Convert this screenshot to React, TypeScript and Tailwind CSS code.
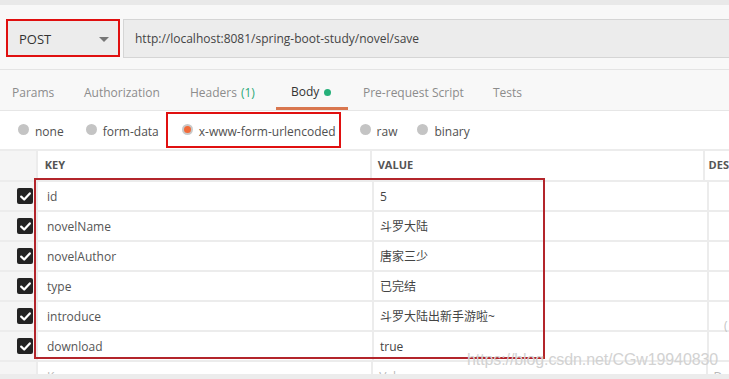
const rows = [
  { key: "id", value: "5" },
  { key: "novelName", value: "斗罗大陆" },
  { key: "novelAuthor", value: "唐家三少" },
  { key: "type", value: "已完结" },
  { key: "introduce", value: "斗罗大陆出新手游啦~" },
  { key: "download", value: "true" },
]

const tabs = [
  { label: "Params", w: "w-[72px]", pl: "pl-[12px]" },
  { label: "Authorization", w: "w-[106px]", pl: "pl-[12px]" },
]

function Radio({ label, active }: { label: string; active?: boolean }) {
  return (
    <div className="flex items-center">
      <span
        className={
          active
            ? "w-[11px] h-[11px] rounded-full bg-[#c9c9c9] flex items-center justify-center -mt-[4px]"
            : "w-[11px] h-[11px] rounded-full bg-[#c4c4c4] -mt-[4px]"
        }
      >
        {active && <span className="w-[7px] h-[7px] rounded-full bg-[#f26b3a]" />}
      </span>
      <span className="ml-[6px] text-[12px] text-[#505050]">{label}</span>
    </div>
  )
}

function Check() {
  return (
    <span className="w-[16px] h-[16px] rounded-[2px] bg-[#232323] flex items-center justify-center">
      <svg width="11" height="9" viewBox="0 0 11 9" fill="none">
        <path d="M1.2 4.6 L4.2 7.5 L9.8 1.4" stroke="#fff" strokeWidth="2.2" strokeLinecap="round" strokeLinejoin="round" />
      </svg>
    </span>
  )
}

export default function App() {
  return (
    <div
      className="relative w-[729px] h-[379px] overflow-hidden bg-[#ececec]"
      style={{ fontFamily: '"Open Sans", "Noto Sans CJK SC", sans-serif' }}
    >
      <div className="h-[5px] bg-[#e9e9e9]" />

      <div className="bg-[#f8f8f8] pt-[14px]">
        {/* url bar */}
        <div className="flex h-[39px] pl-[6px]">
          <div className="w-[114px] h-[38px] bg-[#ececec] border-2 border-[#e01010] flex items-center justify-between pl-[11px] pr-[9px] pt-[3px]">
            <span className="text-[13px] text-[#333]">POST</span>
            <span className="w-0 h-0 border-l-[5px] border-r-[5px] border-t-[5px] border-l-transparent border-r-transparent border-t-[#777]" />
          </div>
          <div className="ml-[3px] flex-1 bg-[#ececec] border border-[#d5d5d5] border-r-0 flex items-center pl-[11px] pt-[1px]">
            <span className="text-[12px] text-[#444]">http://localhost:8081/spring-boot-study/novel/save</span>
          </div>
        </div>

        {/* tabs */}
        <div className="mt-[11px] border-t border-[#e4e4e4] h-[41px] flex items-end">
          {tabs.map((t) => (
            <div key={t.label} className={`${t.w} ${t.pl} h-full flex items-center pt-[6px]`}>
              <span className="text-[12px] text-[#8c8c8c]">{t.label}</span>
            </div>
          ))}
          <div className="w-[98px] pl-[12px] h-full flex items-center pt-[6px]">
            <span className="text-[12px] text-[#8c8c8c]">Headers</span>
            <span className="ml-[4px] text-[12px] text-[#2aa877]">(1)</span>
          </div>
          <div className="w-[72px] h-full flex flex-col">
            <div className="flex-1 flex items-center pl-[15px] pt-[6px]">
              <span className="text-[12px] text-[#333]">Body</span>
              <span className="ml-[5px] mt-[1px] w-[7px] h-[7px] rounded-full bg-[#26b07a]" />
            </div>
            <div className="h-[3px] bg-[#d9774f]" />
          </div>
          <div className="w-[130px] pl-[15px] h-full flex items-center pt-[6px]">
            <span className="text-[12px] text-[#8c8c8c]">Pre-request Script</span>
          </div>
          <div className="pl-[15px] h-full flex items-center pt-[6px]">
            <span className="text-[12px] text-[#8c8c8c]">Tests</span>
          </div>
        </div>
      </div>

      {/* body type radios */}
      <div className="relative h-[39px] bg-white border-t border-[#e6e6e6] flex items-center pt-[3px]">
        <div className="ml-[18px]">
          <Radio label="none" />
        </div>
        <div className="ml-[22px]">
          <Radio label="form-data" />
        </div>
        <div className="ml-[23px]">
          <Radio label="x-www-form-urlencoded" active />
        </div>
        <div className="ml-[24px]">
          <Radio label="raw" />
        </div>
        <div className="ml-[20px]">
          <Radio label="binary" />
        </div>
        <div className="absolute left-[166px] top-[1px] w-[175px] h-[36px] border-2 border-[#e01010]" />
      </div>

      {/* table */}
      <div className="relative bg-white border-t-2 border-[#ececec]">
        <div className="flex h-[31px] border-b-2 border-[#ececec]">
          <div className="w-[38px] bg-[#f5f5f5] border-r-2 border-[#ececec]" />
          <div className="w-[336px] border-r-2 border-[#ececec] flex items-center pl-[7px]">
            <span className="text-[11px] font-bold text-[#555]">KEY</span>
          </div>
          <div className="w-[335px] border-r-2 border-[#ececec] flex items-center pl-[6px]">
            <span className="text-[11px] font-bold text-[#555]">VALUE</span>
          </div>
          <div className="flex-1 flex items-center pl-[4px]">
            <span className="text-[11px] font-bold text-[#555]">DES</span>
          </div>
        </div>

        {rows.map((r) => (
          <div key={r.key} className="flex h-[30px] border-b-2 border-[#ececec]">
            <div className="w-[38px] bg-[#f5f5f5] border-r-2 border-[#ececec] flex items-center justify-end pr-[3px]">
              <Check />
            </div>
            <div className="w-[336px] border-r-2 border-[#ececec] flex items-center pl-[9px] pt-[1px]">
              <span className="text-[12px] text-[#555]">{r.key}</span>
            </div>
            <div className="w-[335px] border-r-2 border-[#ececec] flex items-center pl-[6px] pt-[1px]">
              <span className="text-[12px] text-[#444]">{r.value}</span>
            </div>
            <div className="flex-1" />
          </div>
        ))}

        <div className="flex h-[30px]">
          <div className="w-[38px] bg-[#f5f5f5] border-r-2 border-[#ececec]" />
          <div className="w-[336px] border-r-2 border-[#ececec] flex items-start pt-[6px] pl-[9px]">
            <span className="text-[12px] text-[#b8b8b8]">Key</span>
          </div>
          <div className="w-[335px] border-r-2 border-[#ececec] flex items-start pt-[6px] pl-[6px]">
            <span className="text-[12px] text-[#b8b8b8]">Value</span>
          </div>
          <div className="flex-1 flex items-start pt-[6px] pl-[6px]">
            <span className="text-[12px] text-[#b8b8b8]">De</span>
          </div>
        </div>

        {/* highlight */}
        <div className="absolute left-[34px] top-[27px] w-[511px] h-[181px] border-2 border-[#b3252b]" />

        {/* watermark */}
        <div
          className="absolute left-[467px] top-[197px] text-[16px] text-[#d2d2d2] tracking-[-0.1px]"
          style={{ fontFamily: '"Liberation Sans", sans-serif' }}
        >
          https://blog.csdn.net/CGw19940830
        </div>
        <div className="absolute left-[724px] top-[166px] text-[12px] text-[#c4c4c4]">(</div>
      </div>

      <div className="absolute left-0 bottom-0 w-full h-[5px] bg-[#ececec]" />
    </div>
  )
}
